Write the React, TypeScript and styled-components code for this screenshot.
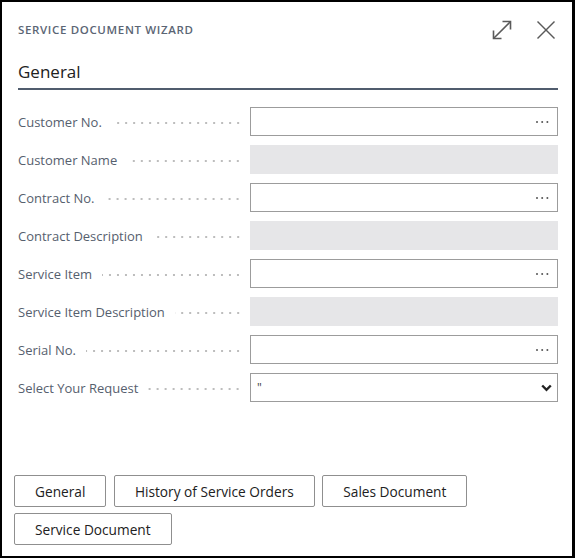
import React from "react";
import styled, { createGlobalStyle } from "styled-components";

const Global = createGlobalStyle`
  html, body { margin: 0; padding: 0; background: #fff; }
  body { font-family: "Open Sans", "Noto Sans", Arial, sans-serif; }
  * { box-sizing: border-box; }
`;

const Dialog = styled.div`
  width: 575px;
  height: 558px;
  border: 2px solid #000;
  border-right-width: 3px;
  background: #fff;
  display: flex;
  flex-direction: column;
`;

const Header = styled.div`
  display: flex;
  align-items: center;
  justify-content: space-between;
  padding: 7px 15px 0 16px;
  height: 48px;
`;

const Title = styled.div`
  font-family: "Open Sans", sans-serif;
  font-size: 11.5px;
  font-weight: 600;
  letter-spacing: 0.65px;
  color: #5b6574;
  text-transform: uppercase;
`;

const Actions = styled.div`
  display: flex;
  align-items: center;
  gap: 22px;
`;

const IconButton = styled.span`
  display: inline-flex;
  width: 22px;
  height: 22px;
  align-items: center;
  justify-content: center;
  color: #5a5a5a;
`;

const Body = styled.div`
  padding: 0 14px 0 16px;
`;

const SectionTitle = styled.div`
  font-size: 17px;
  color: #212121;
  padding: 10px 0 4px 0;
  line-height: 24px;
  border-bottom: 2px solid #505c6d;
`;

const Form = styled.div`
  display: grid;
  grid-template-columns: 232px 1fr;
  row-gap: 9px;
  padding-top: 17px;
`;

const Label = styled.div`
  display: flex;
  align-items: center;
  height: 29px;
  font-size: 13px;
  color: #56606e;
  white-space: nowrap;
  padding-right: 8px;
`;

const Leader = styled.span`
  flex: 1;
  height: 2px;
  margin: 3px 0 0 10px;
  background-image: radial-gradient(circle, #bdbdbd 0.75px, transparent 1.15px);
  background-size: 8px 2px;
  background-repeat: repeat-x;
  background-position: right center;
`;

const Field = styled.div<{ $disabled?: boolean }>`
  height: 29px;
  display: flex;
  align-items: center;
  justify-content: flex-end;
  padding: 0 8px;
  border: ${(p) => (p.$disabled ? "none" : "1px solid #9c9c9c")};
  background: ${(p) => (p.$disabled ? "#e6e6e8" : "#fff")};
`;

const Ellipsis = styled.svg`
  display: block;
  margin-top: 1px;
`;

const SelectWrap = styled.div`
  position: relative;
  height: 29px;
`;

const Select = styled.select`
  appearance: none;
  width: 100%;
  height: 29px;
  border: 1px solid #9c9c9c;
  border-radius: 0;
  background: #fff;
  padding: 0 28px 0 6px;
  font-family: "Open Sans", sans-serif;
  font-size: 12px;
  color: #444;
  outline: none;
`;

const Chevron = styled.svg`
  position: absolute;
  right: 6px;
  top: 11px;
  pointer-events: none;
`;

const Footer = styled.div`
  margin-top: auto;
  display: flex;
  flex-wrap: wrap;
  gap: 6px 7.5px;
  padding: 0 14px 11px 12px;
`;

const Button = styled.button`
  height: 32px;
  padding: 0 20px;
  border: 1px solid #8f8f8f;
  border-radius: 2px;
  background: #fff;
  font-family: "Open Sans", sans-serif;
  font-size: 13.7px;
  font-weight: 500;
  color: #212121;
  white-space: nowrap;
`;

type Row = { label: string; kind: "lookup" | "disabled" | "select" };

const rows: Row[] = [
  { label: "Customer No.", kind: "lookup" },
  { label: "Customer Name", kind: "disabled" },
  { label: "Contract No.", kind: "lookup" },
  { label: "Contract Description", kind: "disabled" },
  { label: "Service Item", kind: "lookup" },
  { label: "Service Item Description", kind: "disabled" },
  { label: "Serial No.", kind: "lookup" },
  { label: "Select Your Request", kind: "select" },
];

export default function App() {
  return (
    <>
      <Global />
      <Dialog>
        <Header>
          <Title>Service Document Wizard</Title>
          <Actions>
            <IconButton>
              <svg width="22" height="22" viewBox="0 0 22 22" fill="none" stroke="currentColor" strokeWidth="1.6">
                <path d="M2.5 19.5 L19.5 2.5" />
                <path d="M11.5 2.5 H19.5 V10.5" />
                <path d="M2.5 11.5 V19.5 H10.5" />
              </svg>
            </IconButton>
            <IconButton>
              <svg width="20" height="20" viewBox="0 0 20 20" fill="none" stroke="currentColor" strokeWidth="1.4">
                <path d="M1.5 1.5 L18.5 18.5" />
                <path d="M18.5 1.5 L1.5 18.5" />
              </svg>
            </IconButton>
          </Actions>
        </Header>
        <Body>
          <SectionTitle>General</SectionTitle>
          <Form>
            {rows.map((r) => (
              <React.Fragment key={r.label}>
                <Label>
                  {r.label}
                  <Leader />
                </Label>
                {r.kind === "select" ? (
                  <SelectWrap>
                    <Select defaultValue="q">
                      <option value="q">"</option>
                    </Select>
                    <Chevron width="11" height="8" viewBox="0 0 11 8" fill="none" stroke="#222" strokeWidth="2.4">
                      <path d="M1.2 1.5 L5.5 5.8 L9.8 1.5" />
                    </Chevron>
                  </SelectWrap>
                ) : (
                  <Field $disabled={r.kind === "disabled"}>
                    {r.kind === "lookup" && (
                      <Ellipsis width="14" height="4" viewBox="0 0 14 4" fill="#555">
                        <circle cx="2" cy="2" r="1" />
                        <circle cx="7.2" cy="2" r="1" />
                        <circle cx="12.4" cy="2" r="1" />
                      </Ellipsis>
                    )}
                  </Field>
                )}
              </React.Fragment>
            ))}
          </Form>
        </Body>
        <Footer>
          <Button>General</Button>
          <Button>History of Service Orders</Button>
          <Button>Sales Document</Button>
          <Button>Service Document</Button>
        </Footer>
      </Dialog>
    </>
  );
}
